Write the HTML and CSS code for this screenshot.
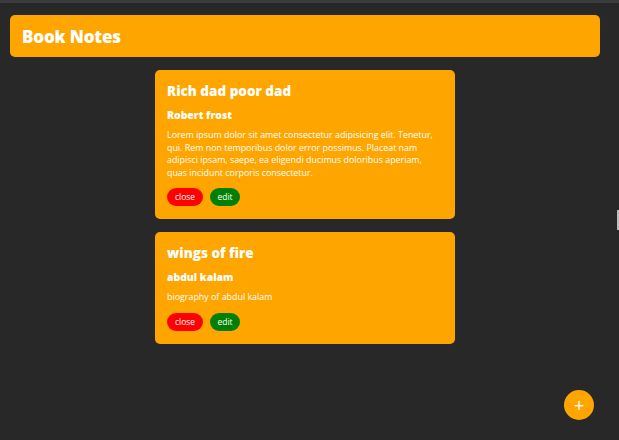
FILE: index.html
```html
<!DOCTYPE html>
<html lang="en">
<head>
<meta charset="utf-8">
<title>Book Notes</title>
<link rel="stylesheet" href="styles.css">
</head>
<body>
<div class="topstrip"></div>
<div class="page">
  <header class="header">
    <h1 class="brand">Book Notes</h1>
  </header>
  <main class="notes">
    <article class="card">
      <h2 class="card-title">Rich dad poor dad</h2>
      <h3 class="card-author">Robert frost</h3>
      <p class="card-text">Lorem ipsum dolor sit amet consectetur adipisicing elit. Tenetur, qui. Rem non temporibus dolor error possimus. Placeat nam adipisci ipsam, saepe, ea eligendi ducimus doloribus aperiam, quas incidunt corporis consectetur.</p>
      <div class="actions">
        <button class="btn btn-close">close</button>
        <button class="btn btn-edit">edit</button>
      </div>
    </article>
    <article class="card">
      <h2 class="card-title">wings of fire</h2>
      <h3 class="card-author">abdul kalam</h3>
      <p class="card-text">biography of abdul kalam</p>
      <div class="actions">
        <button class="btn btn-close">close</button>
        <button class="btn btn-edit">edit</button>
      </div>
    </article>
  </main>
</div>
<button class="fab" aria-label="add">+</button>
<div class="edge-marker"></div>
</body>
</html>
```
FILE: styles.css
```css
html, body {
  margin: 0;
  padding: 0;
  height: 100%;
}
body {
  background: #282828;
  font-family: "Open Sans", "DejaVu Sans", sans-serif;
  color: #fff;
  overflow: hidden;
}
.topstrip {
  height: 3px;
  background: #3b3b3b;
}
.page {
  width: 610px;
  padding-top: 12px;
}
.header {
  margin: 0 10px;
  height: 42px;
  background: #ffa500;
  border-radius: 5px;
  display: flex;
  align-items: center;
  padding: 0 12px;
}
.brand {
  margin: 0;
  font-size: 17px;
  font-weight: 800;
  letter-spacing: -0.2px;
  color: #fff;
}
.notes {
  display: flex;
  flex-direction: column;
  align-items: center;
  gap: 13px;
  padding-top: 13px;
}
.card {
  width: 300px;
  box-sizing: border-box;
  background: #ffa500;
  border-radius: 5px;
  padding: 12px 12px 13px;
}
.card-title {
  margin: 0;
  font-size: 13.5px;
  line-height: 18px;
  font-weight: 800;
}
.card-author {
  margin: 8px 0 0;
  font-size: 10.4px;
  line-height: 14px;
  font-weight: 800;
}
.card-text {
  margin: 7px 0 0;
  font-size: 8.9px;
  line-height: 12.5px;
  font-weight: 400;
}
.actions {
  display: flex;
  gap: 7px;
  margin-top: 9px;
}
.btn {
  border: none;
  height: 18px;
  padding: 0;
  border-radius: 9px;
  font-family: inherit;
  font-size: 8.5px;
  color: #fff;
  line-height: 18px;
}
.btn-close {
  background: #ff0000;
  width: 36px;
}
.btn-edit {
  background: #008000;
  width: 30px;
}
.fab {
  position: fixed;
  left: 564px;
  top: 390px;
  width: 30px;
  height: 30px;
  border-radius: 50%;
  border: none;
  background: #ffa500;
  color: #fff;
  font-family: "DejaVu Sans", sans-serif;
  font-size: 14px;
  font-weight: 400;
  line-height: 30px;
  padding: 0;
}
.edge-marker {
  position: fixed;
  left: 617px;
  top: 210px;
  width: 2px;
  height: 20px;
  background: #bdbdbd;
}
```
